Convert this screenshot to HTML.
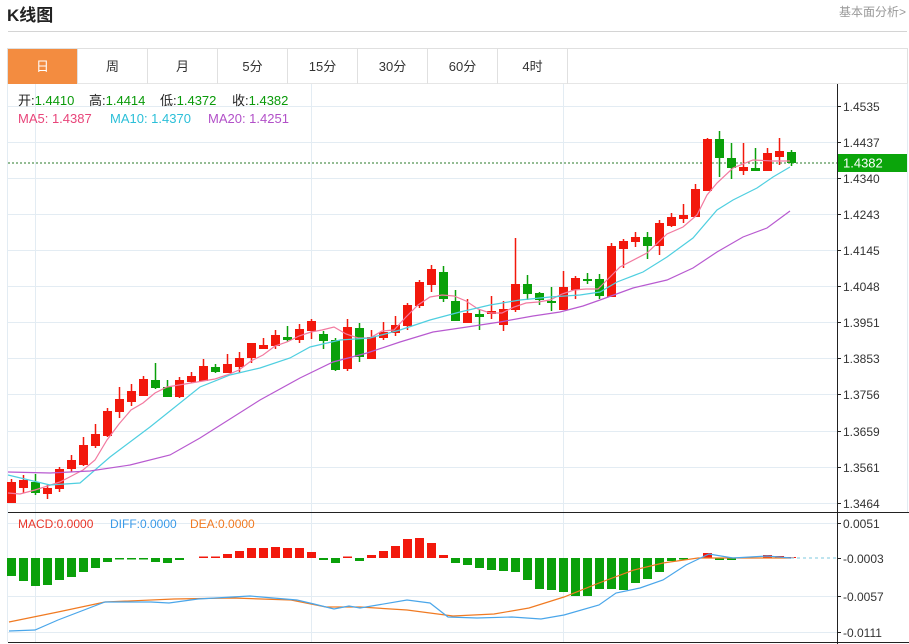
<!DOCTYPE html>
<html><head><meta charset="utf-8"><style>
*{margin:0;padding:0;box-sizing:border-box}
body{width:909px;height:644px;background:#fff;font-family:"Liberation Sans","Noto Sans CJK SC",sans-serif;position:relative;overflow:hidden}
.t{position:absolute;left:7px;top:1px;font-size:17px;font-weight:bold;color:#222}
.r{position:absolute;right:3px;top:3px;font-size:12px;color:#999}
.hr{position:absolute;left:8px;top:31px;width:899px;height:1px;background:#d4d4d4}
.tabs{position:absolute;left:7px;top:48px;width:901px;height:36px;border:1px solid #e0e0e0;border-bottom:1px solid #e6e6e6}
.tab{position:absolute;top:0;height:35px;width:70px;border-right:1px solid #e0e0e0;text-align:center;line-height:35px;font-size:13px;color:#333}
.on{background:#f38c40;color:#fff}
</style></head><body>
<div class="t">K线图</div><div class="r">基本面分析&gt;</div>
<div class="hr"></div>
<div class="tabs">
<div class="tab on" style="left:0">日</div><div class="tab" style="left:70px">周</div><div class="tab" style="left:140px">月</div><div class="tab" style="left:210px">5分</div><div class="tab" style="left:280px">15分</div><div class="tab" style="left:350px">30分</div><div class="tab" style="left:420px">60分</div><div class="tab" style="left:490px">4时</div>
</div>
<svg width="909" height="644" style="position:absolute;left:0;top:0" font-family="Liberation Sans, Noto Sans CJK SC, sans-serif">
<g stroke="#e3ecf3" stroke-width="1">
<line x1="8" y1="106.5" x2="837" y2="106.5"/><line x1="8" y1="142.5" x2="837" y2="142.5"/><line x1="8" y1="178.5" x2="837" y2="178.5"/><line x1="8" y1="214.5" x2="837" y2="214.5"/><line x1="8" y1="250.5" x2="837" y2="250.5"/><line x1="8" y1="286.5" x2="837" y2="286.5"/><line x1="8" y1="322.5" x2="837" y2="322.5"/><line x1="8" y1="358.5" x2="837" y2="358.5"/><line x1="8" y1="394.5" x2="837" y2="394.5"/><line x1="8" y1="431.5" x2="837" y2="431.5"/><line x1="8" y1="467.5" x2="837" y2="467.5"/><line x1="8" y1="503.5" x2="837" y2="503.5"/>
<line x1="8" y1="523.5" x2="837" y2="523.5"/><line x1="8" y1="596.5" x2="837" y2="596.5"/><line x1="8" y1="632.5" x2="837" y2="632.5"/>
<line x1="35.5" y1="84" x2="35.5" y2="642"/><line x1="311.5" y1="84" x2="311.5" y2="642"/><line x1="563.5" y1="84" x2="563.5" y2="642"/>
<line x1="907.5" y1="84" x2="907.5" y2="512"/><line x1="7.5" y1="84" x2="7.5" y2="642"/>
</g>
<g stroke="#222" stroke-width="1">
<line x1="837.5" y1="84" x2="837.5" y2="644"/><line x1="8" y1="512.5" x2="909" y2="512.5"/><line x1="8" y1="642.5" x2="909" y2="642.5"/>
<line x1="837" y1="106.5" x2="841" y2="106.5"/><line x1="837" y1="142.5" x2="841" y2="142.5"/><line x1="837" y1="178.5" x2="841" y2="178.5"/><line x1="837" y1="214.5" x2="841" y2="214.5"/><line x1="837" y1="250.5" x2="841" y2="250.5"/><line x1="837" y1="286.5" x2="841" y2="286.5"/><line x1="837" y1="322.5" x2="841" y2="322.5"/><line x1="837" y1="358.5" x2="841" y2="358.5"/><line x1="837" y1="394.5" x2="841" y2="394.5"/><line x1="837" y1="431.5" x2="841" y2="431.5"/><line x1="837" y1="467.5" x2="841" y2="467.5"/><line x1="837" y1="503.5" x2="841" y2="503.5"/>
<line x1="837" y1="523.5" x2="841" y2="523.5"/><line x1="837" y1="558.5" x2="841" y2="558.5"/><line x1="837" y1="596.5" x2="841" y2="596.5"/><line x1="837" y1="632.5" x2="841" y2="632.5"/>
</g>
<g font-size="12" fill="#333">
<text x="843" y="111">1.4535</text><text x="843" y="147">1.4437</text><text x="843" y="183">1.4340</text><text x="843" y="219">1.4243</text><text x="843" y="255">1.4145</text><text x="843" y="291">1.4048</text><text x="843" y="327">1.3951</text><text x="843" y="363">1.3853</text><text x="843" y="399">1.3756</text><text x="843" y="436">1.3659</text><text x="843" y="472">1.3561</text><text x="843" y="508">1.3464</text>
<text x="843" y="528">0.0051</text><text x="843" y="563">-0.0003</text><text x="843" y="601">-0.0057</text><text x="843" y="637">-0.0111</text>
</g>
<line x1="8" y1="163" x2="837" y2="163" stroke="#2a7a2a" stroke-dasharray="2,2"/>
<rect x="838" y="154" width="69" height="18" fill="#0ba50b"/>
<text x="843" y="167.5" font-size="13" fill="#fff">1.4382</text>
<g font-size="13">
<text x="18" y="105" fill="#222">开:<tspan fill="#0a9a0a">1.4410</tspan></text>
<text x="89" y="105" fill="#222">高:<tspan fill="#0a9a0a">1.4414</tspan></text>
<text x="160" y="105" fill="#222">低:<tspan fill="#0a9a0a">1.4372</tspan></text>
<text x="232" y="105" fill="#222">收:<tspan fill="#0a9a0a">1.4382</tspan></text>
<text x="18" y="123" fill="#e8457a">MA5: 1.4387</text><text x="110" y="123" fill="#2bbfd8">MA10: 1.4370</text><text x="208" y="123" fill="#b250c8">MA20: 1.4251</text>
</g>
<g font-size="12"><text x="18" y="528" fill="#e8362a">MACD:0.0000</text><text x="110" y="528" fill="#3a9ae8">DIFF:0.0000</text><text x="190" y="528" fill="#f07a22">DEA:0.0000</text></g>

<path stroke="#f2180c" stroke-width="1.5" fill="none" d="M11.5 479V503M23.5 475V493M47.5 485V499M59.5 467V492M71.5 455V472M83.5 437V466M95.5 424V448M107.5 408V437M119.5 387V418M131.5 384V406M143.5 376V396M179.5 377V398M191.5 372V383M203.5 359V381M227.5 354V373M239.5 352V373M251.5 343V363M263.5 338V349M275.5 330V349M299.5 324V343M311.5 319V339M347.5 319V371M371.5 330V359M383.5 322V340M395.5 316V336M407.5 303V330M419.5 280V308M431.5 265V292M467.5 299V323M491.5 296V319M503.5 301V331M515.5 238V312M563.5 271V310M575.5 276V299M611.5 243V297M623.5 239V268M635.5 232V247M659.5 220V255M671.5 213V227M683.5 204V223M695.5 184V217M707.5 138V191M743.5 143V175M767.5 148V171M779.5 138V165"/>
<path fill="#f2180c" d="M7 482h9v21h-9zM19 480h9v8h-9zM43 488h9v6h-9zM55 469h9v20h-9zM67 460h9v9h-9zM79 445h9v20h-9zM91 434h9v12h-9zM103 411h9v25h-9zM115 399h9v13h-9zM127 391h9v11h-9zM139 379h9v17h-9zM175 380h9v17h-9zM187 376h9v6h-9zM199 366h9v15h-9zM223 364h9v9h-9zM235 358h9v9h-9zM247 343h9v15h-9zM259 345h9v4h-9zM271 335h9v11h-9zM295 329h9v11h-9zM307 321h9v10h-9zM343 327h9v42h-9zM367 337h9v22h-9zM379 332h9v6h-9zM391 325h9v8h-9zM403 305h9v21h-9zM415 282h9v24h-9zM427 269h9v16h-9zM463 313h9v10h-9zM487 311h9v3h-9zM499 309h9v16h-9zM511 284h9v26h-9zM559 287h9v23h-9zM571 278h9v12h-9zM607 246h9v51h-9zM619 241h9v8h-9zM631 237h9v5h-9zM655 223h9v23h-9zM667 217h9v9h-9zM679 215h9v4h-9zM691 189h9v28h-9zM703 139h9v52h-9zM739 167h9v4h-9zM763 153h9v18h-9zM775 151h9v6h-9z"/>
<path stroke="#0aa00a" stroke-width="1.5" fill="none" d="M35.5 474V495M155.5 363V389M167.5 380V397M215.5 364V373M287.5 326V342M323.5 331V349M335.5 338V371M359.5 323V362M443.5 266V302M455.5 290V321M479.5 310V330M527.5 275V300M539.5 292V305M551.5 287V311M587.5 273V284M599.5 274V299M647.5 232V259M719.5 131V177M731.5 143V179M755.5 148V171M791.5 150V166"/>
<path fill="#0aa00a" d="M31 482h9v11h-9zM151 380h9v8h-9zM163 387h9v10h-9zM211 367h9v5h-9zM283 337h9v3h-9zM319 334h9v7h-9zM331 340h9v30h-9zM355 328h9v29h-9zM439 272h9v27h-9zM451 301h9v20h-9zM475 314h9v3h-9zM523 284h9v10h-9zM535 293h9v7h-9zM547 301h9v2h-9zM583 279h9v2h-9zM595 279h9v17h-9zM643 237h9v9h-9zM715 139h9v19h-9zM727 158h9v10h-9zM751 168h9v3h-9zM787 152h9v11h-9z"/>

<g fill="none" stroke-width="1.2">
<polyline stroke="#f27aa0" points="8,493 20,494 35,490 60,482 83,470 95,460 107,440 119,424 131,410 143,403 155,393 167,387 179,385 191,383 203,381 215,379 227,375 239,370 251,361 263,355 275,346 287,342 299,336 311,332 322,330 334,327 346,334 358,338 370,338 382,331 394,330 406,317 418,305 430,297 442,295 454,296 466,301 478,309 490,313 502,313 514,307 526,303 538,302 550,300 562,294 574,290 586,289 598,289 610,277 620,267 647,253 667,234 683,227 697,215 707,195 717,183 733,168 753,160 773,161 790,161"/>
<polyline stroke="#4fcfe0" points="8,475 50,485 80,483 110,457 150,427 200,387 230,375 260,368 290,358 310,347 340,340 370,338 400,330 430,320 460,312 490,305 520,300 550,297 580,295 600,292 617,282 643,272 667,257 693,238 717,210 733,200 757,188 773,177 790,167"/>
<polyline stroke="#b85ad0" points="8,472 50,473 90,471 130,465 170,455 200,438 260,400 300,378 333,362 367,353 400,342 433,332 467,327 500,322 533,316 560,312 583,306 600,300 633,288 667,280 693,268 717,252 743,237 767,228 790,211"/>
</g>

<path fill="#0aa00a" d="M7 558h9v18h-9zM19 558h9v23h-9zM31 558h9v28h-9zM43 558h9v27h-9zM55 558h9v22h-9zM67 558h9v19h-9zM79 558h9v14h-9zM91 558h9v10h-9zM103 558h9v4h-9zM115 558h9v1.5h-9zM127 558h9v1.5h-9zM139 558h9v1.5h-9zM151 558h9v4h-9zM163 558h9v5h-9zM175 558h9v2h-9zM319 558h9v2h-9zM331 558h9v5h-9zM355 558h9v3h-9zM451 558h9v5h-9zM463 558h9v7h-9zM475 558h9v10h-9zM487 558h9v12h-9zM499 558h9v13h-9zM511 558h9v14h-9zM523 558h9v22h-9zM535 558h9v31h-9zM547 558h9v32h-9zM559 558h9v34h-9zM571 558h9v38h-9zM583 558h9v38h-9zM595 558h9v31h-9zM607 558h9v31h-9zM619 558h9v32h-9zM631 558h9v25h-9zM643 558h9v21h-9zM655 558h9v14h-9zM667 558h9v3h-9zM679 558h9v1.5h-9zM715 558h9v2h-9zM727 558h9v2h-9z"/>
<path fill="#f2180c" d="M199 556.5h9v1.5h-9zM211 556.5h9v1.5h-9zM223 554h9v4h-9zM235 551h9v7h-9zM247 548h9v10h-9zM259 548h9v10h-9zM271 547h9v11h-9zM283 548h9v10h-9zM295 548h9v10h-9zM307 552h9v6h-9zM343 556.5h9v1.5h-9zM367 555h9v3h-9zM379 551h9v7h-9zM391 546h9v12h-9zM403 539h9v19h-9zM415 538h9v20h-9zM427 543h9v15h-9zM439 555h9v3h-9zM703 553h9v5h-9zM763 555h9v3h-9zM775 556h9v2h-9zM787 557h9v1h-9z"/>
<line x1="791" y1="558" x2="836" y2="558" stroke="#a8dcea" stroke-dasharray="3,3" stroke-width="1.5"/>
<g fill="none" stroke-width="1.2">
<polyline stroke="#f07a22" points="9,622 58,612 105,602 174,599 233,598 291,600 326,607 360,607 407,610 453,616 494,614 529,608 564,597 599,583 634,570 663,563 698,558 791,558"/>
<polyline stroke="#4aa6ea" points="9,631 35,630 58,620 105,602 151,602 169,603 198,599 250,596 297,600 314,604 334,609 349,606 360,608 407,600 430,603 448,617 477,618 512,617 541,619 564,615 599,605 616,593 640,588 663,580 686,565 709,554 733,558 767,556 791,558"/>
</g>
</svg>
</body></html>
